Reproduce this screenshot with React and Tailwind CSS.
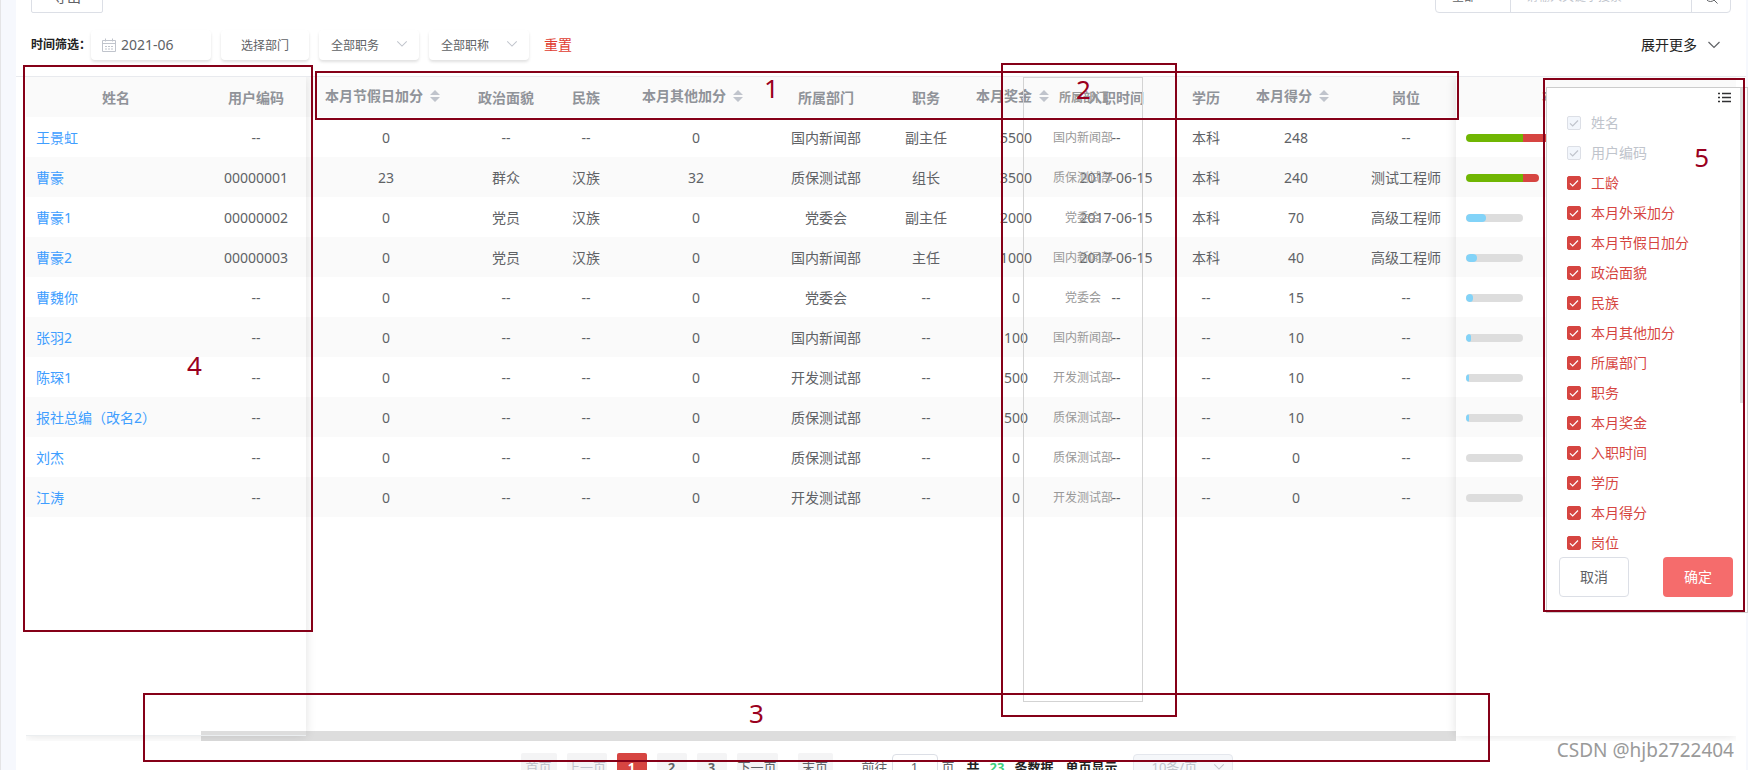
import React from "react";

const CELL = "h-10 p-0 pt-0.5 text-center font-normal";

const columns = [
  { title: "本月节假日加分", sortable: true, width: "w-[160px]" },
  { title: "政治面貌", width: "w-[80px]" },
  { title: "民族", width: "w-[80px]" },
  { title: "本月其他加分", sortable: true, width: "w-[140px]" },
  { title: "所属部门", width: "w-[120px]" },
  { title: "职务", width: "w-[80px]" },
  { title: "本月奖金", sortable: true, width: "w-[100px]" },
  { title: "入职时间", width: "w-[100px]" },
  { title: "学历", width: "w-[80px]" },
  { title: "本月得分", sortable: true, width: "w-[100px]" },
  { title: "岗位", width: "w-[120px]" },
];

const rows = [
  { name: "王景虹", code: "--", cells: ["0", "--", "--", "0", "国内新闻部", "副主任", "5500", "--", "本科", "248", "--"], over: 28 },
  { name: "曹豪", code: "00000001", cells: ["23", "群众", "汉族", "32", "质保测试部", "组长", "3500", "2017-06-15", "本科", "240", "测试工程师"], over: 16 },
  { name: "曹豪1", code: "00000002", cells: ["0", "党员", "汉族", "0", "党委会", "副主任", "2000", "2017-06-15", "本科", "70", "高级工程师"], part: 20 },
  { name: "曹豪2", code: "00000003", cells: ["0", "党员", "汉族", "0", "国内新闻部", "主任", "1000", "2017-06-15", "本科", "40", "高级工程师"], part: 11 },
  { name: "曹魏你", code: "--", cells: ["0", "--", "--", "0", "党委会", "--", "0", "--", "--", "15", "--"], part: 7 },
  { name: "张羽2", code: "--", cells: ["0", "--", "--", "0", "国内新闻部", "--", "100", "--", "--", "10", "--"], part: 5 },
  { name: "陈琛1", code: "--", cells: ["0", "--", "--", "0", "开发测试部", "--", "500", "--", "--", "10", "--"], part: 3 },
  { name: "报社总编（改名2）", code: "--", cells: ["0", "--", "--", "0", "质保测试部", "--", "500", "--", "--", "10", "--"], part: 3 },
  { name: "刘杰", code: "--", cells: ["0", "--", "--", "0", "质保测试部", "--", "0", "--", "--", "0", "--"], part: 0 },
  { name: "江涛", code: "--", cells: ["0", "--", "--", "0", "开发测试部", "--", "0", "--", "--", "0", "--"], part: 0 },
];

const fields = ["姓名", "用户编码", "工龄", "本月外采加分", "本月节假日加分", "政治面貌", "民族", "本月其他加分", "所属部门", "职务", "本月奖金", "入职时间", "学历", "本月得分", "岗位"];

function Chevron({ className }) {
  return (
    <svg viewBox="0 0 14 8" className={className} fill="none" stroke="currentColor" strokeWidth="1.2" aria-hidden="true">
      <path d="M1.5 1l5.5 5.5L12.500 1" />
    </svg>
  );
}

function SortCarets() {
  return (
    <svg viewBox="0 0 24 14" className="h-3.5 w-6" fill="#c0c4cc" aria-hidden="true">
      <path d="M12 1l5 5H7zM12 13l5-5H7z" />
    </svg>
  );
}

function CalendarIcon() {
  return (
    <svg viewBox="0 0 14 14" className="h-3.5 w-3.5 text-[#c0c4cc]" fill="none" stroke="currentColor" aria-hidden="true">
      <path d="M.5 2.500h13v11H.5zM.5 5.500h13M3.500 .5v3M10.500 .5v3M3 8.500h2M6 8.500h2M9 8.500h2M3 11h2M6 11h2M9 11h2" />
    </svg>
  );
}

function FilterSelect({ label }) {
  return (
    <div className="relative h-[30px] w-[100px] rounded bg-white shadow-[0_2px_3px_rgba(0,0,0,0.12)]">
      <select aria-label={label} className="h-full w-full appearance-none bg-transparent pt-0.5 pl-3 text-xs leading-4 text-[#606266]">
        <option>{label}</option>
      </select>
      <Chevron className="pointer-events-none absolute top-[10px] right-[11px] h-2 w-3 text-[#c0c4cc]" />
    </div>
  );
}

function Progress({ row }) {
  if (row.over) {
    return (
      <div className="flex h-2 w-max overflow-hidden rounded-full">
        <div className="w-[57px] bg-[#70b603]" />
        <div className="bg-[#d64541]" style={{ width: row.over }} />
      </div>
    );
  }
  return (
    <div className="h-2 w-[57px] overflow-hidden rounded-full bg-[#ddd]">
      <div className="h-2 rounded-full bg-[#82d3f8]" style={{ width: row.part }} />
    </div>
  );
}

function Field({ label, locked }) {
  return (
    <label className={`flex h-[30px] items-center gap-2.5 text-sm ${locked ? "text-[#c0c4cc]" : "text-[#d64541]"}`}>
      <span className="grid h-3.5 w-3.5 place-items-center">
        <input
          type="checkbox"
          defaultChecked
          disabled={locked}
          className="col-start-1 row-start-1 h-3.5 w-3.5 appearance-none rounded-xs border border-[#d64541] bg-[#d64541] disabled:border-[#dcdfe6] disabled:bg-[#f2f6fc]"
        />
        <svg viewBox="0 0 14 14" className="pointer-events-none col-start-1 row-start-1 h-3.5 w-3.5" fill="none" stroke={locked ? "#c0c4cc" : "#fff"} strokeWidth="1.2" aria-hidden="true">
          <path d="M3 7.300l2.700 2.700L11 4.500" />
        </svg>
      </span>
      {label}
    </label>
  );
}

function Mark({ box, digit, children }) {
  return (
    <>
      <div className={`pointer-events-none absolute z-40 border-2 border-[#850018] ${box}`} />
      <span className={`pointer-events-none absolute z-40 text-[26px] leading-7 text-[#9a0020] ${digit}`}>{children}</span>
    </>
  );
}

const stripe = (i) => (i % 2 ? "bg-[#fafafa]" : "");
const PAGE_BUTTON = "h-7 rounded-xs bg-[#f4f4f5] text-[13px]";

export default function App() {
  return (
    <div
      lang="zh-CN"
      className="relative h-screen overflow-hidden border-l border-[#e4e4e6] bg-[#f6f8fd] pr-0.5 pl-[15px] font-['Noto_Sans','Noto_Sans_CJK_SC',sans-serif] text-sm leading-5 text-[#606266]"
    >
      <main className="flow-root h-full bg-white">
        <div className="-mt-5 flex h-[33px] items-stretch justify-between pr-[15px] pl-[15px]">
          <button className="w-[72px] rounded-xs border border-[#dcdfe6] bg-white text-sm">导出</button>
          <div className="flex w-[296px] rounded border border-[#dcdfe6]">
            <select aria-label="搜索范围" className="w-[75px] appearance-none border-r border-[#dcdfe6] pl-4 text-xs">
              <option>全部</option>
            </select>
            <input aria-label="关键字" placeholder="请输入关键字搜索" className="min-w-0 flex-1 px-[15px] text-xs placeholder:text-[#c0c4cc]" />
            <button aria-label="搜索" className="flex w-[39px] items-center justify-center border-l border-[#dcdfe6]">
              <svg viewBox="0 0 14 14" className="h-3.5 w-3.5" fill="none" stroke="currentColor" aria-hidden="true">
                <circle cx="6.500" cy="6.500" r="5" />
                <path d="M10 10l3.500 3.500" />
              </svg>
            </button>
          </div>
        </div>

        <div className="flex h-[63px] items-center justify-between pr-[25px] pl-[15px]">
          <div className="flex items-center gap-2.5">
            <div className="flex items-center">
              <label htmlFor="month" className="w-[60px] text-xs font-bold whitespace-nowrap text-[#222]">时间筛选：</label>
              <div className="flex h-[30px] w-[120px] items-center gap-[5px] rounded bg-white pl-[11px] shadow-[0_2px_3px_rgba(0,0,0,0.12)]">
                <CalendarIcon />
                <input id="month" defaultValue="2021-06" className="w-20 bg-transparent text-sm" />
              </div>
            </div>
            <button className="h-[30px] w-[88px] rounded bg-white pt-0.5 text-xs shadow-[0_2px_3px_rgba(0,0,0,0.12)]">选择部门</button>
            <FilterSelect label="全部职务" />
            <FilterSelect label="全部职称" />
            <button className="ml-[5px] text-sm text-[#e03c31]">重置</button>
          </div>
          <button className="flex items-center gap-2.5 text-sm text-[#222]">
            展开更多
            <Chevron className="h-2 w-3.5 text-[#606266]" />
          </button>
        </div>

        <section className="relative h-[665px] border-t border-[#e8eaee] pr-2.5 pl-2.5">
          <div className="relative flex h-full overflow-hidden">
            <div className="relative z-10 h-[659px] w-[280px] shrink-0 border-b border-[#ebeef0] shadow-[0_0_10px_rgba(0,0,0,0.12)]">
              <table className="w-full table-fixed border-collapse">
                <thead className="bg-[#fafafa] text-[#909399]">
                  <tr>
                    <th className="h-10 w-[180px] p-0 pt-0.5 font-bold">姓名</th>
                    <th className="h-10 p-0 pt-0.5 font-bold">用户编码</th>
                  </tr>
                </thead>
                <tbody>
                  {rows.map((r, i) => (
                    <tr key={r.name} className={stripe(i)}>
                      <td className="h-10 p-0 pt-0.5 pl-2.5"><a href="#" className="text-[#409eff]">{r.name}</a></td>
                      <td className={CELL}>{r.code}</td>
                    </tr>
                  ))}
                </tbody>
              </table>
            </div>

            <div className="min-w-0 flex-1 overflow-hidden">
              <table className="w-[1160px] table-fixed border-collapse">
                <thead className="bg-[#fafafa] text-[#909399]">
                  <tr>
                    {columns.map((c) => (
                      <th key={c.title} className={`h-10 p-0 pt-0.5 font-bold ${c.width}`}>
                        {c.sortable ? (
                          <button className="inline-flex items-center pb-1 font-bold whitespace-nowrap">
                            {c.title}
                            <SortCarets />
                          </button>
                        ) : (
                          c.title
                        )}
                      </th>
                    ))}
                  </tr>
                </thead>
                <tbody>
                  {rows.map((r, i) => (
                    <tr key={r.name} className={stripe(i)}>
                      {r.cells.map((v, j) => (
                        <td key={j} className={CELL}>{v}</td>
                      ))}
                    </tr>
                  ))}
                </tbody>
              </table>
            </div>

            <div className="relative z-10 h-[659px] w-[280px] shrink-0 bg-white shadow-[0_0_10px_rgba(0,0,0,0.12)]">
              <table className="w-full table-fixed border-collapse">
                <thead className="bg-[#fafafa] text-[#909399]">
                  <tr>
                    <th className="h-10 p-0 pt-0.5 font-bold">
                      <button className="inline-flex items-center pb-1 font-bold">本月得分进度<SortCarets /></button>
                    </th>
                  </tr>
                </thead>
                <tbody>
                  {rows.map((r, i) => (
                    <tr key={r.name} className={stripe(i)}>
                      <td className="h-10 p-0 pt-0.5 pl-2.5"><Progress row={r} /></td>
                    </tr>
                  ))}
                </tbody>
              </table>
            </div>

            <div className="absolute right-[280px] bottom-0 left-[175px] h-2.5 bg-[#ddd]" />
          </div>

          <div className="absolute top-0 left-[1007px] h-[625px] w-[120px] border border-[#d3d3d3] text-center text-xs text-[#999]">
            <div className="flex h-10 items-center justify-center font-bold">所属部门</div>
            {rows.map((r) => (
              <div key={r.name} className="flex h-10 items-center justify-center">{r.cells[4]}</div>
            ))}
          </div>
        </section>

        <nav aria-label="分页" className="mt-3 flex h-7 items-center justify-center pr-2 text-[13px] whitespace-nowrap">
          <button disabled className={`${PAGE_BUTTON} w-9 text-[#c0c4cc]`}>首页</button>
          <button disabled className={`${PAGE_BUTTON} ml-2.5 w-10 text-[#c0c4cc]`}>上一页</button>
          <button className="ml-2.5 h-7 w-[30px] rounded-xs bg-[#d64541] text-[13px] font-bold text-white">1</button>
          <button className={`${PAGE_BUTTON} ml-2.5 w-[30px] font-bold`}>2</button>
          <button className={`${PAGE_BUTTON} ml-2.5 w-[30px] font-bold`}>3</button>
          <button className={`${PAGE_BUTTON} ml-2.5 w-[41px]`}>下一页</button>
          <button className={`${PAGE_BUTTON} ml-5 w-[35px]`}>末页</button>
          <label className="ml-[29px] flex items-center gap-1">
            前往
            <input defaultValue="1" className="h-[26px] w-[46px] rounded border border-[#dcdfe6] bg-white text-center" />
            页
          </label>
          <span className="ml-3 font-bold text-[#222]">共</span>
          <span className="ml-2.5 font-bold text-[#3ecf7e]">23</span>
          <span className="ml-2.5 font-bold text-[#222]">条数据</span>
          <label htmlFor="size" className="ml-3 font-bold text-[#222]">单页显示</label>
          <div className="relative ml-4 h-[26px] w-[100px]">
            <select id="size" disabled className="h-full w-full appearance-none rounded border border-[#e4e7ed] bg-[#f5f7fa] pl-[17px] text-[13px] text-[#c0c4cc] opacity-100">
              <option>10条/页</option>
            </select>
            <Chevron className="pointer-events-none absolute top-[9px] right-2 h-2 w-3 text-[#c0c4cc]" />
          </div>
        </nav>
      </main>

      <aside className="absolute top-[87px] right-0 z-30 w-[202px] border border-[#ccc] bg-white">
        <div className="flex h-5 items-start justify-end pt-1 pr-4">
          <svg viewBox="0 0 13 11" className="h-[11px] w-[13px]" fill="none" stroke="#303133" strokeWidth="1.400" aria-hidden="true">
            <path d="M4 1.500h9M4 5.500h9M4 9.500h9M0 1.500h2M0 5.500h2M0 9.500h2" />
          </svg>
        </div>
        <div className="h-[449px] overflow-hidden pl-5">
          {fields.map((f, i) => (
            <Field key={f} label={f} locked={i < 2} />
          ))}
        </div>
        <div className="flex h-[55px] items-start justify-between pr-3.5 pl-3">
          <button className="h-10 w-[70px] rounded border border-[#dcdfe6] bg-white text-sm">取消</button>
          <button className="h-10 w-[70px] rounded bg-[#f56c6c] text-sm text-white">确定</button>
        </div>
        <div className="absolute top-0 right-[3px] h-[315px] w-1 bg-[#ddd]" />
      </aside>

      <Mark box="top-[71px] left-[314px] h-[49px] w-[1144px]" digit="top-[74px] left-[763px]">1</Mark>
      <Mark box="top-[63px] left-[1000px] h-[654px] w-[176px]" digit="top-[75px] left-[1075px]">2</Mark>
      <Mark box="top-[693px] left-[142px] h-[69px] w-[1347px]" digit="top-[699px] left-[748px]">3</Mark>
      <Mark box="top-[65px] left-[22px] h-[567px] w-[290px]" digit="top-[351px] left-[186px]">4</Mark>
      <Mark box="top-[78px] right-[3px] h-[534px] w-[202px]" digit="top-[143px] right-[39px]">5</Mark>

      <span className="absolute right-3.5 bottom-1.5 text-[19px] leading-7 text-[#9a9a9a] [text-shadow:1px_1px_0_#fff]">CSDN @hjb2722404</span>
    </div>
  );
}
